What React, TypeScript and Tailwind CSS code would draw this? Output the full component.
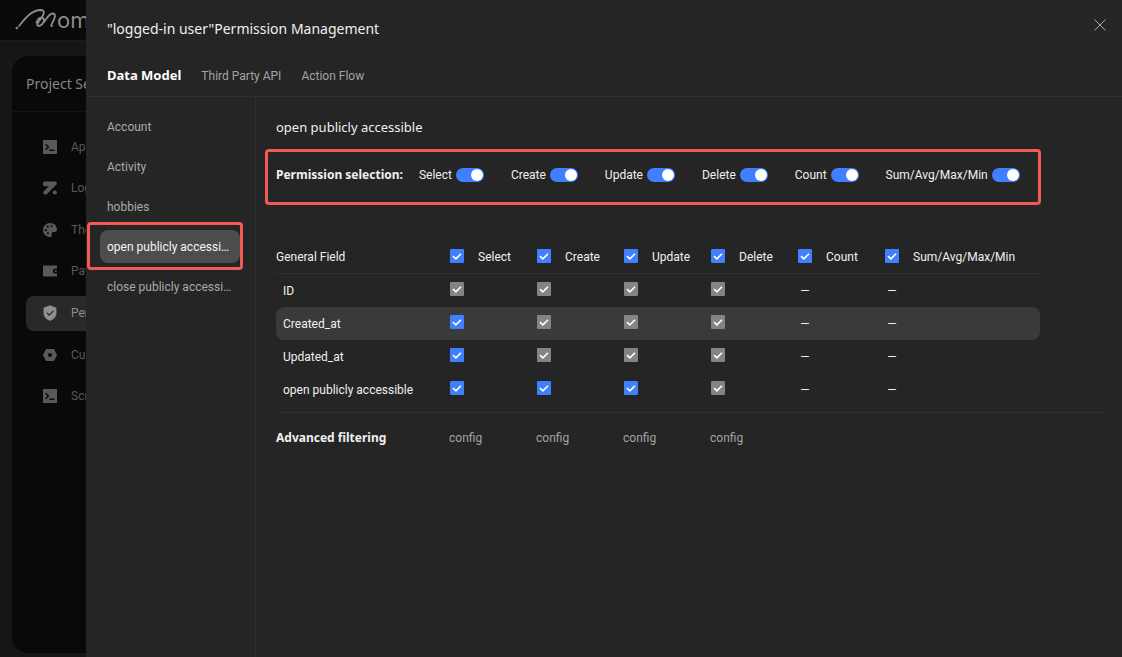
import React, { useState } from "react";

const PERMISSIONS = ["Select", "Create", "Update", "Delete", "Count", "Sum/Avg/Max/Min"];
const MODELS = [
  "Account",
  "Activity",
  "hobbies",
  "open publicly accessible",
  "close publicly accessible",
];

type CellState = "on" | "locked" | "none";

const FIELDS: { name: string; cells: CellState[] }[] = [
  { name: "ID", cells: ["locked", "locked", "locked", "locked", "none", "none"] },
  { name: "Created_at", cells: ["on", "locked", "locked", "locked", "none", "none"] },
  { name: "Updated_at", cells: ["on", "locked", "locked", "locked", "none", "none"] },
  { name: "open publicly accessible", cells: ["on", "on", "on", "locked", "none", "none"] },
];

function TerminalIcon() {
  return (
    <svg viewBox="0 0 14 14" className="size-3.5 shrink-0" aria-hidden="true">
      <rect width="14" height="14" rx="0.6" fill="currentColor" />
      <path d="M2.6 4.2 5.4 7 2.6 9.8M6.4 10.2h5" fill="none" stroke="#0a0a0a" strokeWidth="1.4" />
    </svg>
  );
}

function LoginIcon() {
  return (
    <svg viewBox="0 0 14 14" className="size-3.5 shrink-0" aria-hidden="true">
      <path
        d="M2 .6h9.9c1.7 0 2.5 1.9 1.3 3.1L4 12.9a2.1 2.1 0 0 1-3-3l4.9-4.7H2A2.2 2.2 0 0 1 2 .6Z"
        fill="currentColor"
      />
      <circle cx="11.8" cy="11.5" r="2.1" fill="currentColor" />
    </svg>
  );
}

function PaletteIcon() {
  return (
    <svg viewBox="0 0 14 14" className="size-3.5 shrink-0" aria-hidden="true">
      <path
        d="M7 0a7 7 0 0 0 0 14c1.4 0 2-.9 1.7-2-.5-1.7.1-2.9 1.7-2.9h1.5C13.3 9.1 14 8 14 6.6 14 2.8 10.8 0 7 0Z"
        fill="currentColor"
      />
      <g fill="#0a0a0a">
        <circle cx="2.9" cy="7.2" r="1.1" />
        <circle cx="4.7" cy="3.7" r="1.1" />
        <circle cx="8.6" cy="3" r="1.1" />
        <circle cx="4.9" cy="10.2" r="1" />
      </g>
    </svg>
  );
}

function WalletIcon() {
  return (
    <svg viewBox="0 0 14 14" className="size-3.5 shrink-0" aria-hidden="true">
      <path d="M0 1.5h14v2.9h-1.5a2.6 2.6 0 0 0 0 5.2H14v2.9H0Z" fill="currentColor" />
      <circle cx="12.8" cy="7" r="1.1" fill="currentColor" />
    </svg>
  );
}

function ShieldIcon() {
  return (
    <svg viewBox="0 0 14 16" className="h-4 w-3.5 shrink-0" aria-hidden="true">
      <path d="M7 .3 13.4 2.7v5.5c0 3.6-2.7 6.1-6.4 7.5C3.3 14.3.6 11.8.6 8.2V2.7Z" fill="currentColor" />
      <path d="m3.900 7.800 2.300 2.300 4.100-4.200" fill="none" stroke="#292929" strokeWidth="1.300" />
    </svg>
  );
}

function HexIcon() {
  return (
    <svg viewBox="0 0 14 14" className="size-3.5 shrink-0" aria-hidden="true">
      <path
        d="M3.600 1h6.800c.4 0 .7.2.9.500l2.500 5c.2.300.2.700 0 1l-2.500 5c-.2.300-.5.500-.9.500H3.600c-.4 0-.7-.2-.9-.5l-2.500-5c-.2-.3-.2-.7 0-1l2.500-5c.2-.3.5-.5.9-.5Z"
        fill="currentColor"
      />
      <circle cx="7" cy="7" r="2" fill="#0a0a0a" />
    </svg>
  );
}

const SETTINGS = [
  { label: "App Settings", icon: <TerminalIcon /> },
  { label: "Login Settings", icon: <LoginIcon /> },
  { label: "Theme", icon: <PaletteIcon /> },
  { label: "Payment", icon: <WalletIcon /> },
  { label: "Permission", icon: <ShieldIcon />, active: true },
  { label: "Custom Domain", icon: <HexIcon /> },
  { label: "Script", icon: <TerminalIcon /> },
];

function Checkbox({ label, locked = false }: { label: string; locked?: boolean }) {
  const [checked, setChecked] = useState(true);
  return (
    <span className="inline-grid size-3.5 shrink-0 align-middle">
      <input
        type="checkbox"
        aria-label={label}
        checked={checked}
        disabled={locked}
        onChange={(e) => setChecked(e.target.checked)}
        className="peer size-3.5 appearance-none rounded-[1px] bg-[#555555] [grid-area:1/1] checked:bg-[#4080ff] disabled:bg-[#848484]"
      />
      <svg
        viewBox="0 0 14 14"
        className="pointer-events-none invisible z-10 size-3.5 [grid-area:1/1] peer-checked:visible"
        aria-hidden="true"
      >
        <path d="m3 7.200 2.900 2.600 5.100-5" fill="none" stroke="#ffffff" strokeWidth="1.600" />
      </svg>
    </span>
  );
}

function Toggle({ label }: { label: string }) {
  const [on, setOn] = useState(true);
  return (
    <label className="flex items-center gap-1">
      {label}
      <input
        type="checkbox"
        role="switch"
        checked={on}
        onChange={(e) => setOn(e.target.checked)}
        className="flex h-3.5 w-7 appearance-none rounded-full bg-[#666666] p-px before:size-3 before:rounded-full before:bg-white checked:justify-end checked:bg-[#4080ff]"
      />
    </label>
  );
}

function Background() {
  return (
    <div className="flex w-[86px] shrink-0 flex-col overflow-hidden bg-[#161616] whitespace-nowrap">
      <header className="flex h-[41px] shrink-0 items-center border-b border-[#1c1c1c] bg-[#0a0a0a] pl-[15px] text-[#8c8c8c]">
        <svg viewBox="0 0 42 22" className="h-[22px] w-[42px] shrink-0" fill="none" stroke="currentColor" strokeLinecap="round" aria-hidden="true">
          <path
            d="M4 17C9 11 16 1 25.500 1 31 1.200 29 6 24.500 11.500 21 16 22 17.800 25.500 16.300 30 14 33 4.500 37.500 4.500 41.500 4.800 40 8.500 38 12.500 36.500 15.500 35.500 17 37 17.200M21.500 13.500C22 9.500 27 7 28.500 9.500 30 12 27.500 15.500 25.500 16.300"
            strokeWidth="1.800"
          />
          <circle cx="1.800" cy="19" r="1.300" fill="currentColor" stroke="none" />
        </svg>
        <span className="font-['Inter',sans-serif] text-[22px] leading-6">omen</span>
      </header>
      <section className="mt-[15px] mb-1 ml-3 w-60 grow rounded-2xl bg-[#090909]">
        <h2 className="h-14 border-b border-[#151515] pl-3.5 font-['Noto_Sans',sans-serif] text-sm leading-[56px] text-[#868686]">
          Project Settings
        </h2>
        <nav className="mt-[17px] ml-3.5 flex h-[285px] flex-col justify-between font-['Roboto',sans-serif] text-xs text-[#595959]">
          {SETTINGS.map(({ label, icon, active }) => (
            <a
              key={label}
              href="#settings"
              className={
                active
                  ? "flex h-[35px] items-center gap-3.5 rounded-lg bg-[#292929] pl-[17px] text-[#8f8f8f]"
                  : "flex h-[35px] items-center gap-3.5 pl-[17px]"
              }
            >
              {icon}
              {label}
            </a>
          ))}
        </nav>
      </section>
    </div>
  );
}

function PermissionTable() {
  return (
    <table className="mt-[34px] w-[764px] table-fixed border-separate border-spacing-0 text-left">
      <colgroup>
        <col className="w-[174px]" />
        <col className="w-[87px]" />
        <col className="w-[87px]" />
        <col className="w-[87px]" />
        <col className="w-[87px]" />
        <col className="w-[87px]" />
        <col />
      </colgroup>
      <thead>
        <tr className="h-[35px]">
          <th className="border-b border-[#303030] pt-0.5 font-normal">General Field</th>
          {PERMISSIONS.map((p) => (
            <th key={p} className="border-b border-[#303030] font-normal">
              <span className="flex items-center gap-3.5">
                <Checkbox label={`${p} all fields`} />
                <span className="pt-0.5">{p}</span>
              </span>
            </th>
          ))}
        </tr>
      </thead>
      <tbody>
        {FIELDS.map(({ name, cells }) => (
          <tr key={name} className={name === "Created_at" ? "h-[33px] bg-[#3a3a3a] *:first:rounded-l-lg *:last:rounded-r-lg" : "h-[33px]"}>
            <th className="pl-[7px] font-normal">{name}</th>
            {cells.map((state, i) => (
              <td key={PERMISSIONS[i]}>
                {state === "none" ? (
                  <span className="flex w-3.5 justify-center">—</span>
                ) : (
                  <span className="flex pb-[3px]">
                    <Checkbox label={`${PERMISSIONS[i]} ${name}`} locked={state === "locked"} />
                  </span>
                )}
              </td>
            ))}
          </tr>
        ))}
      </tbody>
    </table>
  );
}

export default function App() {
  return (
    <div className="flex min-h-screen bg-[#161616]">
      <Background />
      <main className="flex min-w-0 grow flex-col bg-[#252525] font-['Roboto',sans-serif] text-xs text-[#f0f0f0]">
        <header className="border-b border-[#2f2f2f] pl-[21px]">
          <div className="flex h-14 justify-between">
            <h1 className="font-['Noto_Sans',sans-serif] text-sm leading-[58px]">
              "logged-in user"Permission Management
            </h1>
            <button type="button" aria-label="Close" className="mt-[15px] mr-3 flex size-5 items-center justify-center text-[#a8a8a8]">
              <svg viewBox="0 0 12 12" className="size-3" aria-hidden="true">
                <path d="m.5.5 11 11m0-11-11 11" stroke="currentColor" strokeWidth="1" />
              </svg>
            </button>
          </div>
          <nav className="flex h-10 items-center gap-5 text-[#a3a3a3]">
            <a href="#data-model" className="font-['Noto_Sans',sans-serif] text-[13px] font-bold text-white">
              Data Model
            </a>
            <a href="#third-party-api">Third Party API</a>
            <a href="#action-flow">Action Flow</a>
          </nav>
        </header>
        <div className="flex grow">
          <nav className="flex w-[170px] shrink-0 flex-col gap-[7px] border-r border-[#2f2f2f] pt-[13px] pr-[15px] pl-3.5 text-[#aaaaaa]">
            {MODELS.map((model, i) => (
              <div key={model} className="relative">
                <a
                  href="#model"
                  className={
                    i === 3
                      ? "block truncate rounded-lg bg-[#4d4d4d] px-[7px] pt-0.5 leading-[31px] text-[#f5f5f5]"
                      : "block truncate px-[7px] pt-0.5 leading-[31px]"
                  }
                >
                  {model}
                </a>
                {i === 3 && (
                  <span className="pointer-events-none absolute -top-2 -right-[3px] -bottom-[7px] -left-[13px] rounded-[4px] border-3 border-[#f25a55]" />
                )}
              </div>
            ))}
          </nav>
          <section className="min-w-0 grow pr-4 pl-5 whitespace-nowrap">
            <h2 className="mt-5 font-['Noto_Sans',sans-serif] text-[13px] leading-5">open publicly accessible</h2>
            <div className="mt-3 -ml-[11px] flex h-14 w-fit gap-[27px] rounded-[4px] border-3 border-[#f25a55] pt-[13px] pr-[18px] pb-[17px] pl-2 leading-5">
              <h3 className="-mr-[11px] font-['Noto_Sans',sans-serif] font-bold">Permission selection:</h3>
              {PERMISSIONS.map((p) => (
                <Toggle key={p} label={p} />
              ))}
            </div>
            <PermissionTable />
            <div className="mt-1.5 grid grid-cols-[173px_87px_87px_87px_87px] items-center border-t border-[#2f2f2f] leading-[50px]">
              <h3 className="font-['Noto_Sans',sans-serif] font-bold">Advanced filtering</h3>
              {PERMISSIONS.slice(0, 4).map((p) => (
                <button key={p} type="button" aria-label={`config ${p}`} className="text-left text-[#a3a3a3]">
                  config
                </button>
              ))}
            </div>
          </section>
        </div>
      </main>
    </div>
  );
}
